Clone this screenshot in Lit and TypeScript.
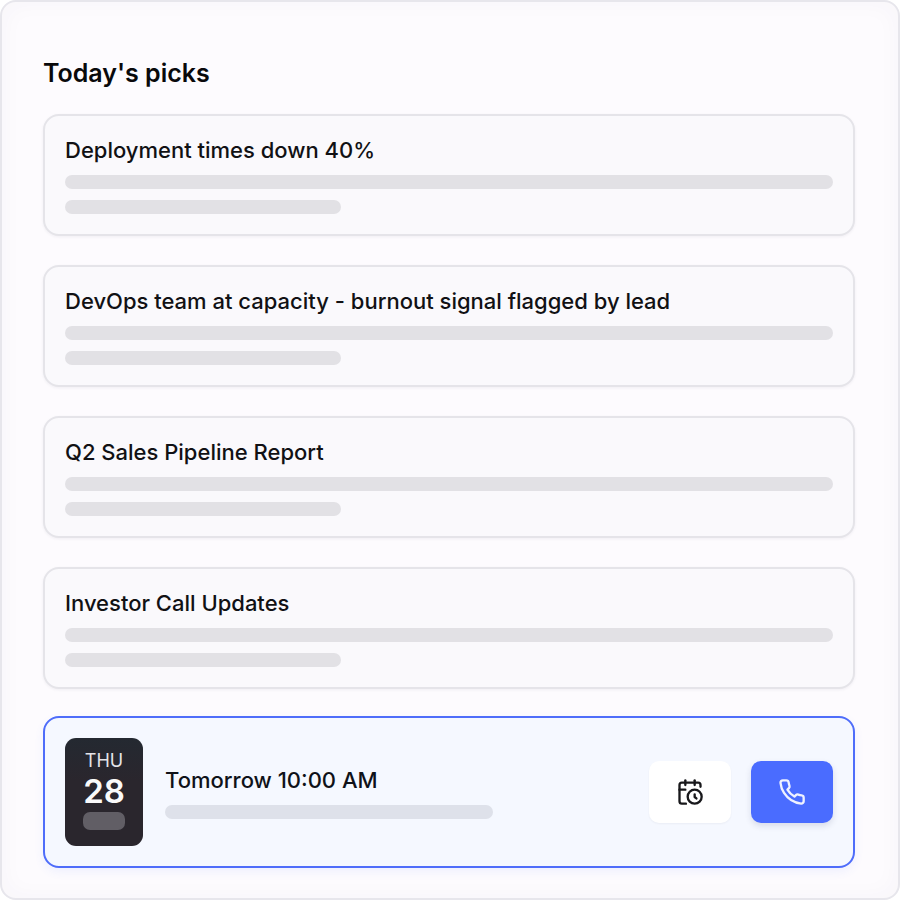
import { html, css, LitElement } from 'lit';
import { customElement, property } from 'lit/decorators.js';

@customElement('pick-card')
export class PickCard extends LitElement {

  static styles = css`
    :host {
      display: flex;
      flex-direction: column;
      gap: 11px;
      padding: 20px;
      border: 2px solid #e5e4e9;
      border-radius: 16px;
      background: #faf9fc;
      box-shadow: 0 1px 3px rgba(40, 35, 60, 0.06);
    }
    .title {
      margin: 0;
      font-size: 22px;
      font-weight: 500;
      line-height: 28px;
      color: #111114;
    }
    .bar {
      height: 14px;
      border-radius: 7px;
      background: #e2e1e5;
    }
    .short {
      width: 36%;
    }
  `;

  @property() heading = '';

  render() {
    return html`
      <h2 class="title">${this.heading}</h2>
      <div class="bar"></div>
      <div class="bar short"></div>
    `;
  }
}

@customElement('event-card')
export class EventCard extends LitElement {

  static styles = css`
    :host {
      display: flex;
      align-items: center;
      gap: 22px;
      padding: 20px;
      border: 2px solid #4f6dfa;
      border-radius: 16px;
      background: #f5f8ff;
      box-shadow: 0 4px 10px rgba(79, 109, 250, 0.08);
    }
    .date {
      box-sizing: border-box;
      display: flex;
      flex-direction: column;
      align-items: center;
      width: 78px;
      padding: 11px 0 16px;
      border-radius: 11px;
      background: linear-gradient(#242931, #2a262d 40%);
    }
    .weekday {
      font-size: 18px;
      line-height: 24px;
      color: #e4e4e8;
    }
    .day {
      font-size: 33px;
      font-weight: 600;
      line-height: 36px;
      color: #fafafa;
    }
    .pill {
      width: 42px;
      height: 18px;
      margin-top: 3px;
      border-radius: 7px;
      background: #615e65;
    }
    .info {
      flex: 1;
      display: flex;
      flex-direction: column;
      gap: 11px;
    }
    .title {
      margin: 0;
      font-size: 22px;
      font-weight: 500;
      line-height: 28px;
      color: #0f1219;
    }
    .bar {
      width: 71%;
      height: 14px;
      border-radius: 7px;
      background: #dee1ea;
    }
    .actions {
      display: flex;
      gap: 20px;
    }
    .action {
      display: flex;
      align-items: center;
      justify-content: center;
      width: 82px;
      height: 62px;
      padding: 0;
      border: 0;
      border-radius: 10px;
      background: #fff;
      color: #18181b;
      box-shadow: 0 1px 2px rgba(40, 35, 60, 0.05);
      cursor: pointer;
    }
    .call {
      background: #4a6cff;
      color: #eef1ff;
      box-shadow: 0 3px 6px rgba(40, 50, 100, 0.14);
    }
    .icon {
      width: 28px;
      height: 28px;
      fill: none;
      stroke: currentColor;
      stroke-width: 2;
      stroke-linecap: round;
      stroke-linejoin: round;
    }
  `;

  @property() weekday = '';
  @property() day = '';
  @property() heading = '';

  render() {
    return html`
      <div class="date">
        <span class="weekday">${this.weekday}</span>
        <span class="day">${this.day}</span>
        <span class="pill"></span>
      </div>
      <div class="info">
        <h2 class="title">${this.heading}</h2>
        <div class="bar"></div>
      </div>
      <div class="actions">
        <button class="action" type="button" aria-label="Reschedule">
          <svg class="icon" viewBox="0 0 24 24" aria-hidden="true">
            <path d="M21 7.5V6a2 2 0 0 0-2-2H5a2 2 0 0 0-2 2v14a2 2 0 0 0 2 2h3.5" />
            <path d="M16 2v4" />
            <path d="M8 2v4" />
            <path d="M3 10h5" />
            <path d="M17.5 17.5 16 16.3V14" />
            <circle cx="16" cy="16" r="6" />
          </svg>
        </button>
        <button class="action call" type="button" aria-label="Call">
          <svg class="icon" viewBox="0 0 24 24" aria-hidden="true">
            <path d="M22 16.92v3a2 2 0 0 1-2.18 2 19.79 19.79 0 0 1-8.63-3.07 19.5 19.5 0 0 1-6-6 19.79 19.79 0 0 1-3.07-8.67A2 2 0 0 1 4.11 2h3a2 2 0 0 1 2 1.72 12.84 12.84 0 0 0 .7 2.81 2 2 0 0 1-.45 2.11L8.09 9.91a16 16 0 0 0 6 6l1.27-1.27a2 2 0 0 1 2.11-.45 12.84 12.84 0 0 0 2.81.7A2 2 0 0 1 22 16.92z" />
          </svg>
        </button>
      </div>
    `;
  }
}

const PICKS = [
  'Deployment times down 40%',
  'DevOps team at capacity - burnout signal flagged by lead',
  'Q2 Sales Pipeline Report',
  'Investor Call Updates',
];

@customElement('app-root')
export class AppRoot extends LitElement {

  static styles = css`
    :host {
      display: block;
      box-sizing: border-box;
      min-height: 100vh;
      padding: 55px 43px 30px 41px;
      border: 2px solid #e7e6ec;
      border-radius: 16px;
      background: #fdfbfe;
      box-shadow: inset 0 0 24px rgba(60, 50, 80, 0.03);
      font-family: Inter, sans-serif;
    }
    .heading {
      margin: 0 0 25px;
      font-size: 25px;
      font-weight: 600;
      line-height: 32px;
      color: #09090b;
    }
    .picks {
      display: flex;
      flex-direction: column;
      gap: 29px;
      margin-bottom: 27px;
    }
  `;

  render() {
    return html`
      <h1 class="heading">Today's picks</h1>
      <div class="picks">
        ${PICKS.map((pick) => html`<pick-card .heading=${pick}></pick-card>`)}
      </div>
      <event-card weekday="THU" day="28" heading="Tomorrow 10:00 AM"></event-card>
    `;
  }
}
